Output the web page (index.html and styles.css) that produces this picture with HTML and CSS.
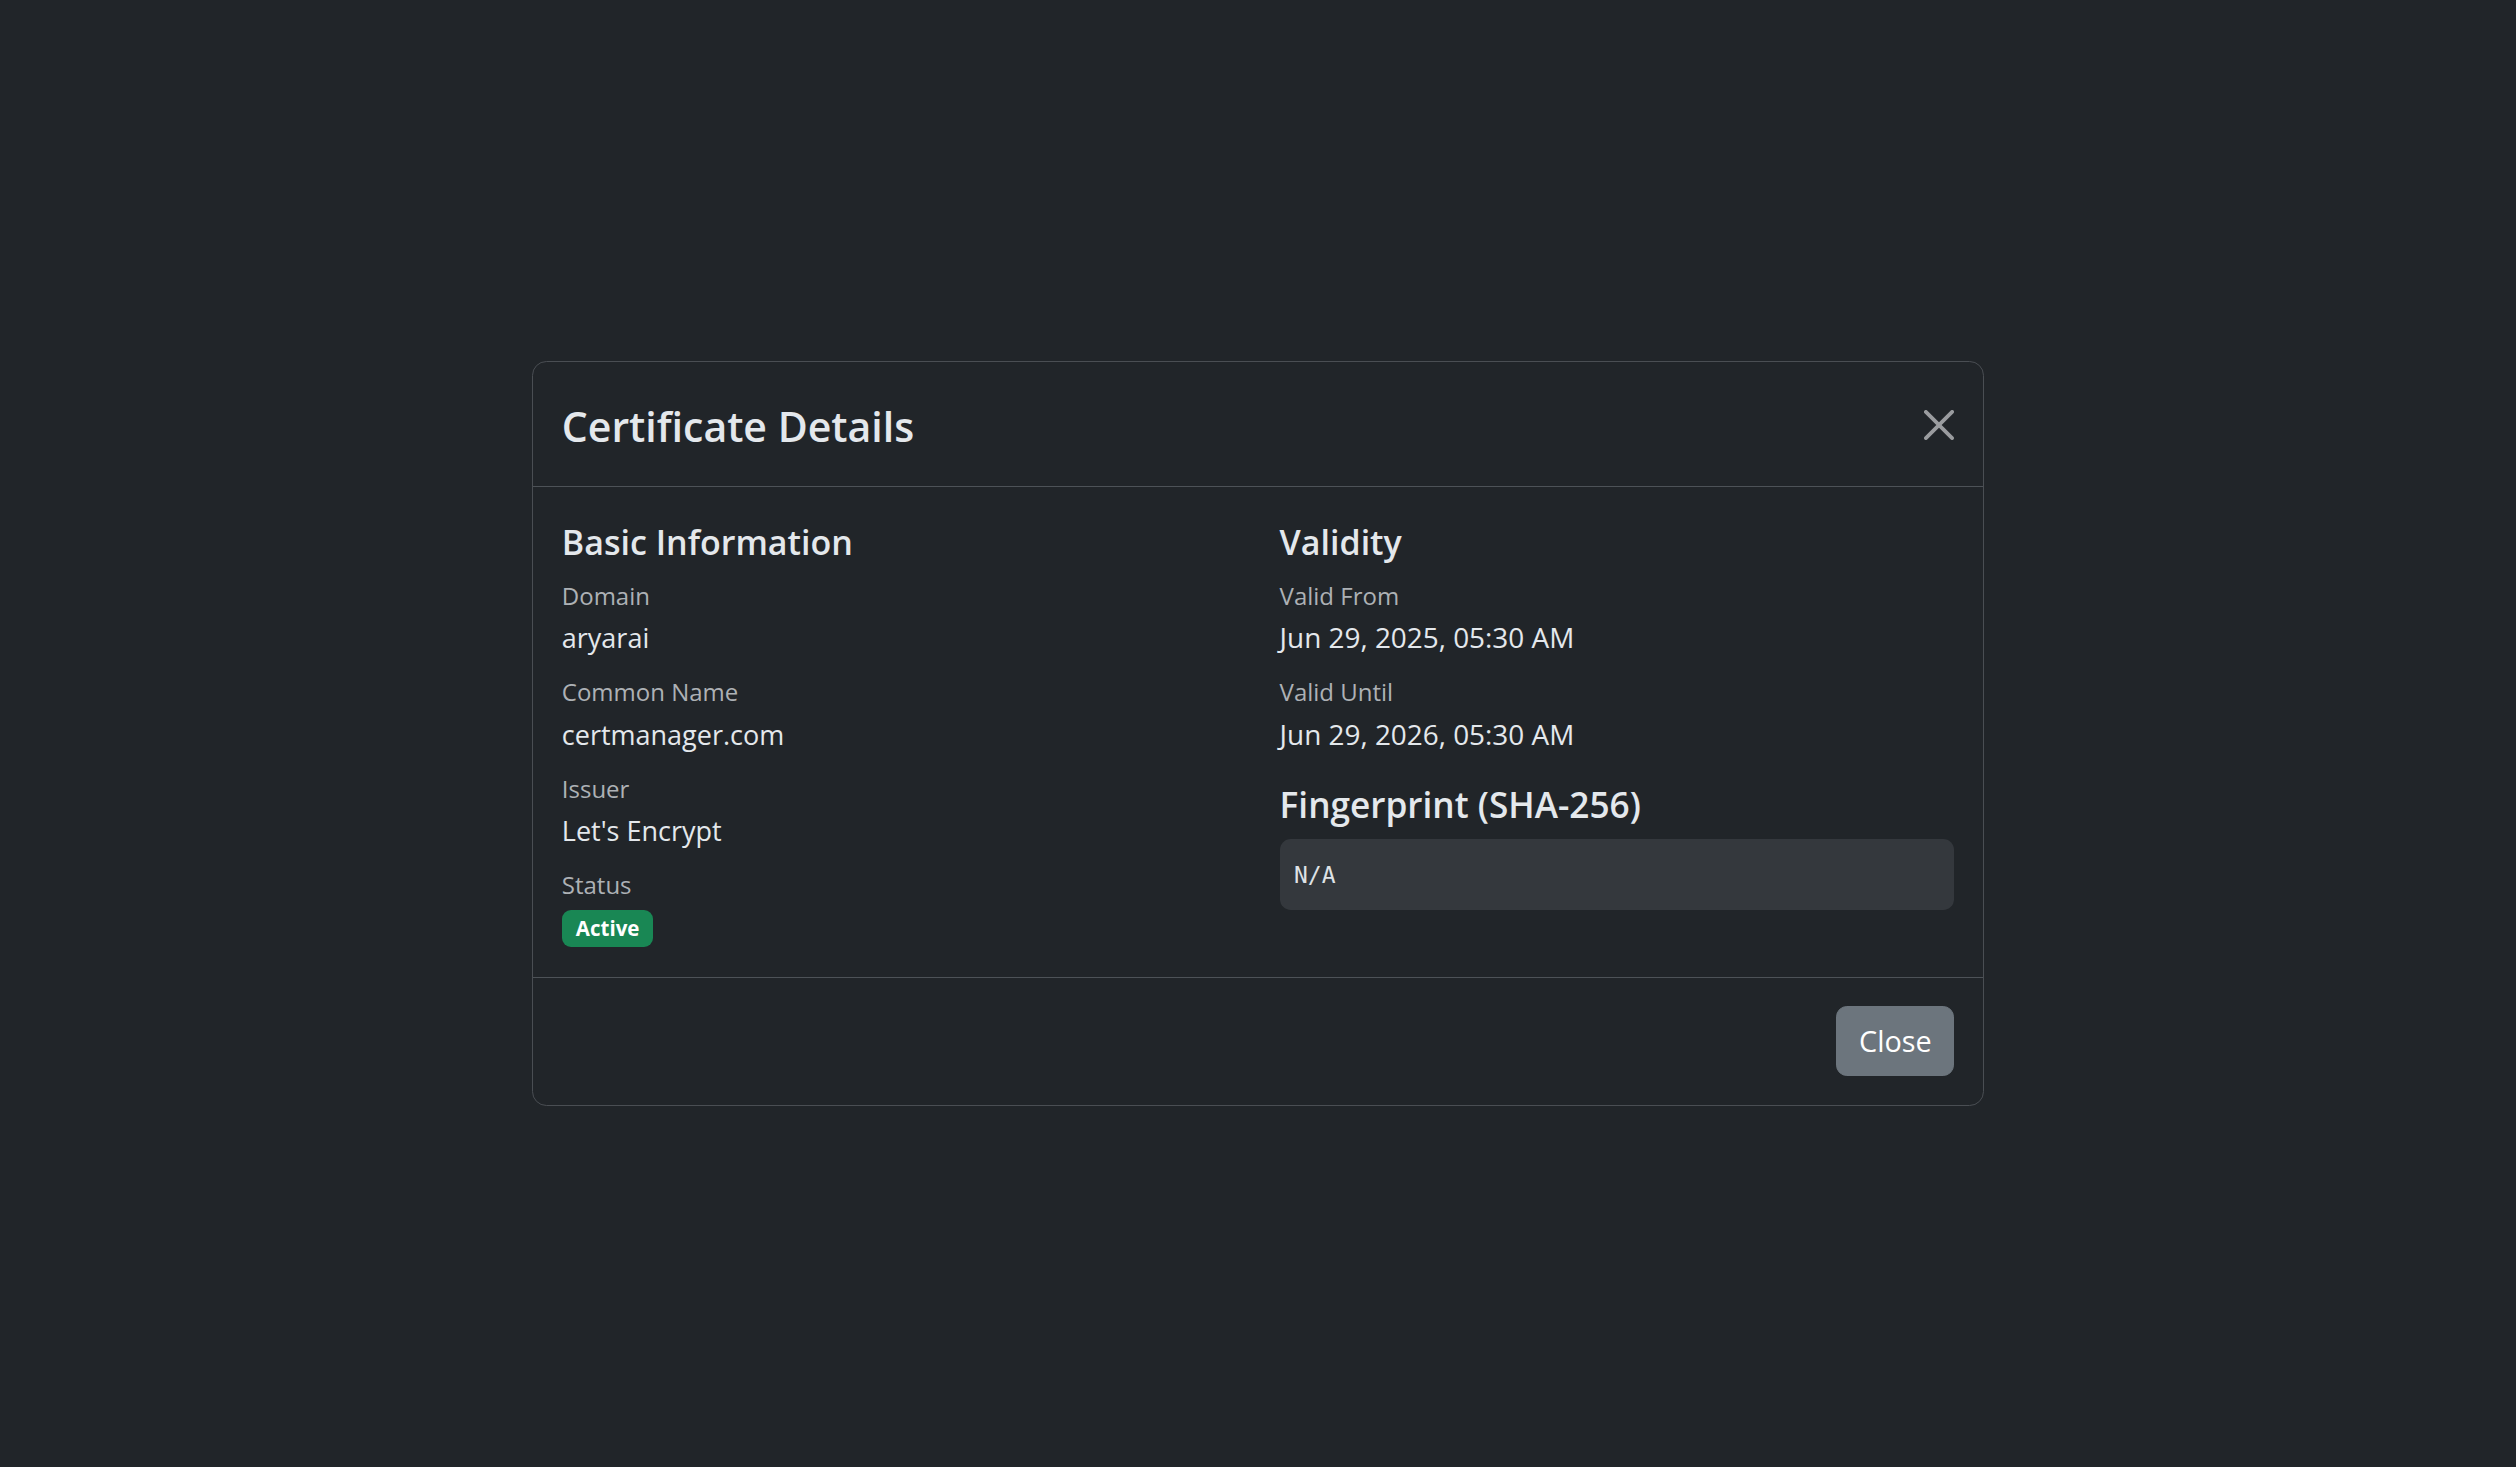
FILE: index.html
```html
<!DOCTYPE html>
<html lang="en">
<head>
<meta charset="utf-8">
<title>Certificate Details</title>
<link rel="stylesheet" href="styles.css">
</head>
<body>
<div class="page">
  <div class="modal">
    <div class="modal-header">
      <h4 class="modal-title">Certificate Details</h4>
      <button class="btn-close" aria-label="Close">
        <svg viewBox="0 0 16 16" width="30" height="30"><path fill="currentColor" d="M.293.293a1 1 0 0 1 1.414 0L8 6.586 14.293.293a1 1 0 1 1 1.414 1.414L9.414 8l6.293 6.293a1 1 0 0 1-1.414 1.414L8 9.414l-6.293 6.293a1 1 0 0 1-1.414-1.414L6.586 8 .293 1.707a1 1 0 0 1 0-1.414"/></svg>
      </button>
    </div>
    <div class="modal-body">
      <div class="col">
        <h5 class="section-title">Basic Information</h5>
        <div class="field">
          <div class="label">Domain</div>
          <div class="value">aryarai</div>
        </div>
        <div class="field">
          <div class="label">Common Name</div>
          <div class="value">certmanager.com</div>
        </div>
        <div class="field">
          <div class="label">Issuer</div>
          <div class="value">Let's Encrypt</div>
        </div>
        <div class="field last">
          <div class="label">Status</div>
          <div class="value"><span class="badge">Active</span></div>
        </div>
      </div>
      <div class="col">
        <h5 class="section-title">Validity</h5>
        <div class="field">
          <div class="label">Valid From</div>
          <div class="value date">Jun 29, 2025, 05:30 AM</div>
        </div>
        <div class="field">
          <div class="label">Valid Until</div>
          <div class="value date">Jun 29, 2026, 05:30 AM</div>
        </div>
        <h5 class="section-title spaced">Fingerprint (SHA-256)</h5>
        <div class="fingerprint"><code>N/A</code></div>
      </div>
    </div>
    <div class="modal-footer">
      <button class="btn-secondary">Close</button>
    </div>
  </div>
</div>
</body>
</html>
```

FILE: styles.css
```css
* { box-sizing: border-box; }
html, body { margin: 0; padding: 0; }
body {
  background: #212529;
  color: #dee2e6;
  font-family: "Open Sans", "Noto Sans", sans-serif;
  font-size: 28.8px;
  line-height: 1.5;
}
.page {
  min-height: 100vh;
  display: flex;
  align-items: center;
  justify-content: center;
}
.modal {
  width: 1452px;
  background: #212529;
  border: 1px solid #4a4e53;
  border-radius: 14.4px;
}
.modal-header {
  display: flex;
  align-items: center;
  justify-content: space-between;
  padding: 32px 28.8px 27px;
  border-bottom: 1.5px solid #4d5257;
}
.modal-title {
  margin: 0;
  font-size: 41px;
  font-weight: 600;
  line-height: 65px;
  color: #e4e8ec;
}
.btn-close {
  background: none;
  border: 0;
  padding: 0;
  width: 30px;
  height: 30px;
  color: #9a9c9f;
  display: flex;
  position: relative;
  top: -2px;
}
.modal-body {
  padding: 29.3px 28.8px 29.3px;
  display: grid;
  grid-template-columns: 1fr 1fr;
  column-gap: 43.2px;
}
.section-title {
  margin: 0 0 13px 0;
  padding-top: 4px;
  font-size: 34px;
  font-weight: 600;
  line-height: 43.2px;
  color: #e4e8ec;
}
.section-title.spaced {
  margin-top: 25px;
  margin-bottom: 13px;
  padding-top: 2px;
  font-size: 35.2px;
}
.field { margin-bottom: 14px; }
.field.last { margin-bottom: 0; }
.label {
  font-size: 24px;
  line-height: 37.8px;
  color: #adb1b5;
}
.value {
  padding-top: 1.5px;
  font-size: 27px;
  line-height: 43.2px;
  color: #e4e8ec;
}
.field.last .value { padding-top: 0; }
.value.date { font-size: 27.9px; }
.badge {
  display: inline-block;
  background: #198754;
  color: #fff;
  font-size: 20.5px;
  font-weight: 700;
  line-height: 1;
  padding: 8px 14px;
  border-radius: 9px;
  vertical-align: baseline;
}
.fingerprint {
  background: #34383d;
  border-radius: 10.8px;
  padding: 14.4px;
  line-height: 37.8px;
}
.fingerprint code {
  font-family: "DejaVu Sans Mono", "Liberation Mono", monospace;
  font-size: 23px;
  color: #dee2e6;
}
.modal-footer {
  display: flex;
  justify-content: flex-end;
  padding: 21.6px;
  border-top: 1.5px solid #4d5257;
}
.btn-secondary {
  margin: 7.2px;
  background: #6c757d;
  color: #fff;
  border: 1px solid #6c757d;
  border-radius: 10.8px;
  padding: 10.8px 21.6px;
  font-family: "Open Sans", "Noto Sans", sans-serif;
  font-size: 28.8px;
  line-height: 46px;
}
```
